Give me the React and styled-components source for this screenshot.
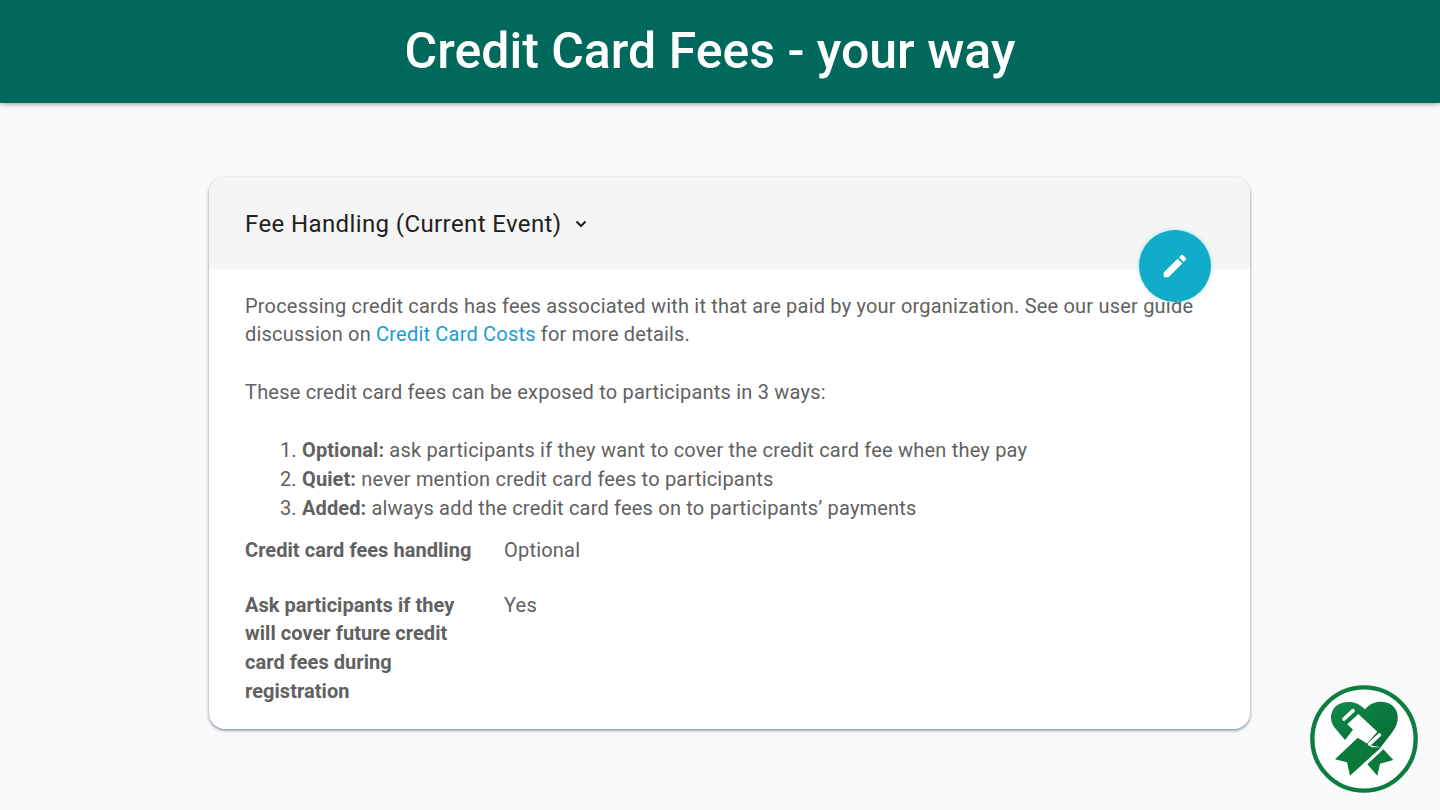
import React from "react";
import styled, { createGlobalStyle } from "styled-components";

const Global = createGlobalStyle`
  html, body { margin: 0; padding: 0; background: #fafafa; }
  body { font-family: Roboto, "Liberation Sans", sans-serif; }
`;
const Page = styled.div`
  position: relative; width: 1440px; height: 810px; overflow: hidden; background: #fafafa;
`;
const TopBar = styled.header`
  height: 103px; background: #00695c; box-shadow: 0 1px 5px rgba(0,0,0,.4);
  display: flex; align-items: center; justify-content: center; padding: 0 20px 2px 0; box-sizing: border-box;
`;
const Title = styled.h1`
  margin: 0; color: #fff; font-size: 50px; font-weight: 500; line-height: 1;
`;
const Card = styled.section`
  position: relative; box-sizing: border-box; width: 1041px; height: 552px; margin: 74px 0 0 209px;
  background: #fff; border-radius: 16px;
  box-shadow: 0 1px 3px rgba(60,90,120,.55), 0 2px 3px rgba(60,90,120,.25);
`;
const CardHead = styled.div`
  height: 92px; box-sizing: border-box; background: #f5f5f5; border-radius: 16px 16px 0 0;
  padding: 2px 36px 0; display: flex; align-items: center; gap: 9px;
  color: #212121; font-size: 24px; line-height: 1; letter-spacing: .39px;
`;
const Chevron = styled.svg`
  width: 20px; height: 20px; fill: none; stroke: #212121; stroke-width: 2;
`;
const Fab = styled.button`
  position: absolute; left: 930px; top: 53px; width: 72px; height: 72px; border: 0; border-radius: 50%;
  background: #11acc9; display: flex; align-items: center; justify-content: center; padding: 0;
  box-shadow: 0 0 4px rgba(17,172,201,.3);
`;
const Body = styled.div`
  padding: 22.6px 36px 0; color: #616161; font-size: 20px; line-height: 28.8px; letter-spacing: .2px;
`;
const Para = styled.p`
  margin: 0 0 29px;
`;
const Link = styled.a`
  color: #1a9bd7; text-decoration: none;
`;
const Steps = styled.ol`
  margin: 0 0 13.4px; padding-inline-start: 57px;
  b { font-weight: 700; letter-spacing: .1px; }
`;
const Fields = styled.dl`
  margin: 0; display: grid; grid-template-columns: 259px 1fr; row-gap: 26px;
`;
const Term = styled.dt`
  font-weight: 700; width: 235px; letter-spacing: .05px;
`;
const Value = styled.dd`
  margin: 0;
`;
const LogoMark = styled.svg`
  position: absolute; left: 1290px; top: 670px; width: 150px; height: 140px;
`;

export default function App() {
  return (
    <Page>
      <Global />
      <TopBar><Title>Credit Card Fees - your way</Title></TopBar>
      <Card>
        <CardHead>
          Fee Handling (Current Event)
          <Chevron viewBox="0 0 20 20"><path d="M5.5 7.5 10 12l4.5-4.5" /></Chevron>
        </CardHead>
        <Fab aria-label="Edit">
          <svg width="30" height="30" viewBox="0 0 24 24" fill="#fff">
            <path d="M3 17.25V21h3.75L17.81 9.94l-3.75-3.75L3 17.25zM20.71 7.04a1 1 0 0 0 0-1.41l-2.34-2.34a1 1 0 0 0-1.41 0l-1.83 1.83 3.75 3.75 1.83-1.83z" />
          </svg>
        </Fab>
        <Body>
          <Para>
            Processing credit cards has fees associated with it that are paid by your organization. See our user guide discussion on <Link href="#">Credit Card Costs</Link> for more details.
          </Para>
          <Para>These credit card fees can be exposed to participants in 3 ways:</Para>
          <Steps>
            <li><b>Optional:</b> ask participants if they want to cover the credit card fee when they pay</li>
            <li><b>Quiet:</b> never mention credit card fees to participants</li>
            <li><b>Added:</b> always add the credit card fees on to participants’ payments</li>
          </Steps>
          <Fields>
            <Term>Credit card fees handling</Term>
            <Value>Optional</Value>
            <Term>Ask participants if they will cover future credit card fees during registration</Term>
            <Value>Yes</Value>
          </Fields>
        </Body>
      </Card>
      <LogoMark viewBox="0 0 450 420">
        <defs>
          <linearGradient id="g" x1="0" y1="0" x2="1" y2="1">
            <stop offset="0" stopColor="#12894a" />
            <stop offset="1" stopColor="#056a33" />
          </linearGradient>
        </defs>
        <circle cx="222" cy="207" r="155" fill="#fff" stroke="#0b7d3e" strokeWidth="13" />
        <path fill="url(#g)" d="M165 210 L133 172 C115 148 122 115 147 102 C172 90 205 95 225 118 C247 92 282 90 305 105 C330 122 328 160 308 185 L272 232 L235 225 L190 178 Z" />
        <path fill="#0a7a3b" d="M135 268 L205 202 L245 232 L274 232 L180 317 L171 277 Z" />
        <path fill="#0a7a3b" d="M232 283 L280 238 L310 270 L270 281 L262 317 Z" />
        <path fill="#fff" d="M172 163 L205 132 L262 185 L232 220 L205 205 L190 180 Z" />
        <path stroke="#fff" strokeWidth="11" strokeLinecap="round" fill="none" d="M162 147 L189 122" />
        <path stroke="#fff" strokeWidth="11" strokeLinecap="round" fill="none" d="M239 222 L268 195" />
      </LogoMark>
    </Page>
  );
}
